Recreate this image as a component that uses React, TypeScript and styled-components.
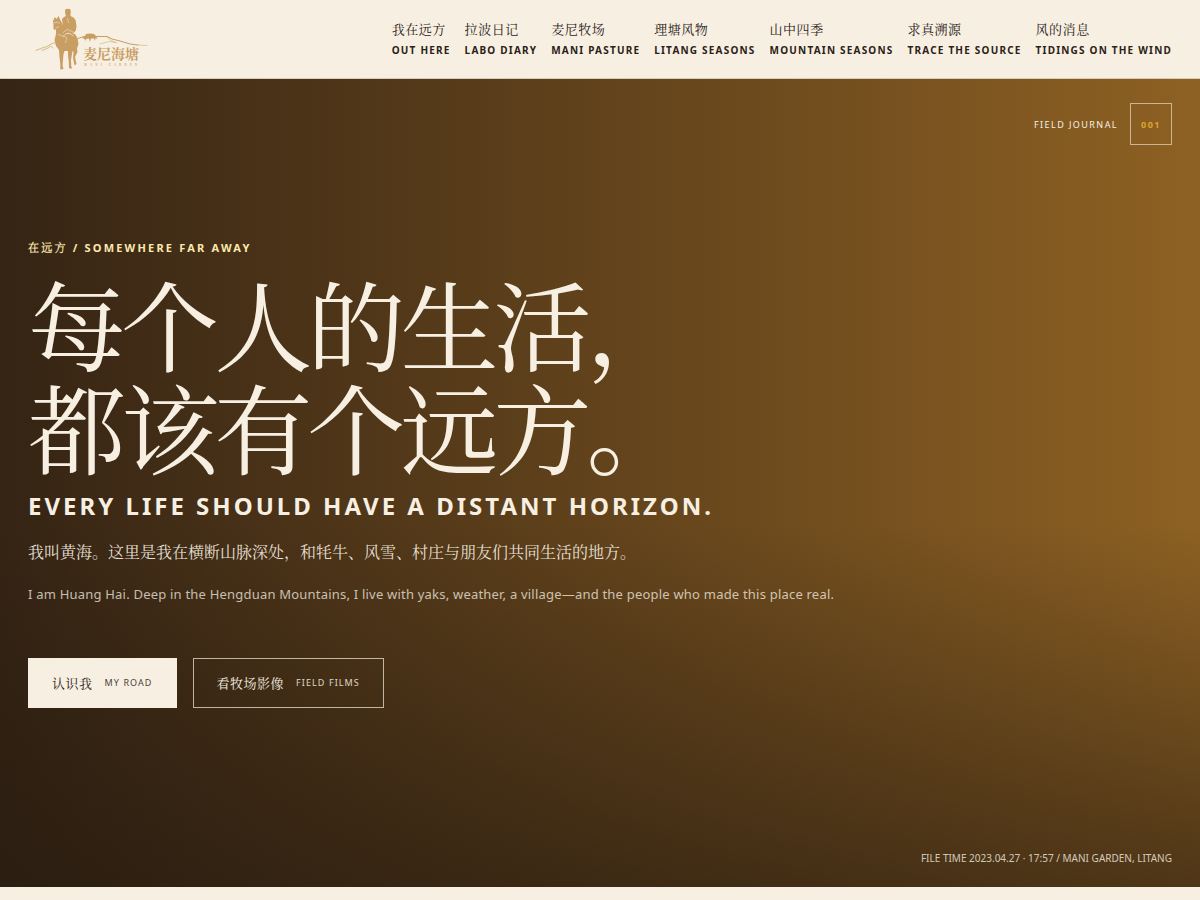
import React from "react";
import styled, { createGlobalStyle } from "styled-components";

const serif = `"Noto Serif CJK SC", "Noto Serif SC", "Noto Sans CJK SC", serif`;
const sans = `"Noto Sans", "Noto Sans CJK SC", sans-serif`;
const eyebrowFont = `"Noto Sans", "Noto Serif CJK SC ExtraLight", "Noto Sans CJK SC", sans-serif`;

const GlobalStyle = createGlobalStyle`
  *, *::before, *::after { box-sizing: border-box; }
  body { margin: 0; background: #f7f0e2; color: #2b2117; font-family: ${sans}; }
  a { color: inherit; text-decoration: none; }
`;

const Header = styled.header`
  display: flex;
  align-items: center;
  justify-content: space-between;
  height: 79px;
  padding: 0 28px;
  background: #f7f0e2;
  border-bottom: 1px solid #d8ccba;
`;

const LogoLink = styled.a`
  display: block;
  line-height: 0;
`;

const Nav = styled.nav`
  display: flex;
  gap: 14px;
`;

const NavLink = styled.a`
  display: flex;
  flex-direction: column;
  gap: 4px;
  white-space: nowrap;
`;

const NavName = styled.span`
  font: 400 13px/18px ${serif};
  letter-spacing: 0.04em;
`;

const NavLabel = styled.span`
  font: 700 10px/16px ${sans};
  letter-spacing: 0.12em;
`;

const Hero = styled.section`
  display: flex;
  flex-direction: column;
  justify-content: space-between;
  min-height: 808px;
  padding: 24px 28px 22px;
  color: #f7f0e2;
  background:
    linear-gradient(0deg, rgba(36, 25, 15, 0.6), rgba(36, 25, 15, 0) 45%),
    linear-gradient(90deg, #352414, #8e6123);
`;

const Journal = styled.div`
  display: flex;
  align-items: center;
  align-self: flex-end;
  gap: 12px;
  font-size: 9px;
  line-height: 13px;
  letter-spacing: 0.16em;
`;

const JournalNumber = styled.b`
  display: grid;
  place-items: center;
  width: 42px;
  height: 42px;
  border: 1px solid rgba(247, 240, 226, 0.6);
  color: #dba52f;
  font-size: 9px;
`;

const Intro = styled.div`
  display: flex;
  flex-direction: column;
  align-items: flex-start;
  margin-bottom: 48px;
`;

const Eyebrow = styled.p`
  margin: 0 0 14px;
  color: #fbe9ae;
  font: 700 11px/16px ${eyebrowFont};
  letter-spacing: 0.2em;
`;

const Title = styled.h1`
  margin: 0;
  font: 400 98px/103px ${serif};
  letter-spacing: -0.05em;
`;

const Subtitle = styled.p`
  margin: 12px 0 0;
  font-size: 24px;
  font-weight: 700;
  line-height: 36px;
  letter-spacing: 3px;
`;

const Lead = styled.p`
  margin: 12px 0 0;
  color: rgba(247, 240, 226, 0.92);
  font: 400 16px/32px ${serif};
`;

const LeadEnglish = styled.p`
  margin: 14px 0 0;
  color: rgba(247, 240, 226, 0.75);
  font-size: 13px;
  line-height: 24px;
  letter-spacing: 0.016em;
`;

const Actions = styled.div`
  display: flex;
  gap: 16px;
  margin-top: 52px;
`;

const Action = styled.a<{ $filled?: boolean }>`
  display: flex;
  align-items: center;
  gap: 12px;
  height: 50px;
  padding: 0 23px;
  border: 1px solid ${(p) => (p.$filled ? "#f7f0e2" : "rgba(247, 240, 226, 0.7)")};
  background: ${(p) => (p.$filled ? "#f7f0e2" : "transparent")};
  color: ${(p) => (p.$filled ? "#2b2117" : "#f7f0e2")};
  font: 400 13px/20px ${serif};
  letter-spacing: 0.04em;
`;

const ActionLabel = styled.small`
  font: 400 9px/12px ${sans};
  letter-spacing: 0.12em;
  opacity: 0.85;
`;

const FileTime = styled.p`
  align-self: flex-end;
  margin: 0;
  color: rgba(247, 240, 226, 0.8);
  font-size: 10px;
  line-height: 14px;
`;

const links = [
  ["我在远方", "OUT HERE"],
  ["拉波日记", "LABO DIARY"],
  ["麦尼牧场", "MANI PASTURE"],
  ["理塘风物", "LITANG SEASONS"],
  ["山中四季", "MOUNTAIN SEASONS"],
  ["求真溯源", "TRACE THE SOURCE"],
  ["风的消息", "TIDINGS ON THE WIND"],
];

function Logo() {
  return (
    <svg width="126" height="68" viewBox="0 0 126 68" fill="#c89e62" role="img" aria-label="麦尼海塘 Mani Garden">
      {/* ridge lines */}
      <g fill="none" stroke="#c89e62" strokeLinecap="round" strokeLinejoin="round">
        <path strokeWidth="0.700" d="M8 45.500L14 43L19 41.500L24 38.500L28 37.500M14 45.500L20 43L22.500 41L25 43" />
        <path strokeWidth="1" d="M50 33.500L56 31.500L68 31.500L79 31.500L84 34L92 36L102 39L110 40" />
        <path strokeWidth="0.500" d="M110 40L119 40.500M79 32L83 35.500L89 38M72 39L77 37.500L82 36.500L87 37.500" />
      </g>
      {/* tent */}
      <path d="M54 33L57 31L58 29L62 28.500L66 29L68 31L69.500 34L67.500 33L67 36L66 33.500L63 33.500L62 37L61 33.500L58 34L57.500 36L56.500 34Z" />
      {/* rider */}
      <path d="M37 6L37.500 4.300L40 3.700L42.300 4.300L42.800 6.500L42.500 9L42.500 11L45.500 12.500L47.500 15L48.500 21L48 25L46 28L41 28L36 29L34 25L34.500 18L34 14L36 12L38 11L37.300 9Z" />
      {/* horse */}
      <path d="M26.800 12L28.500 14L30.500 11L32 14.500L33.500 17L35 21L35 26L38 29L44 28L47 29L49.500 33L50.500 39L49 43.500L49.500 47L47 52L48.500 59L46.500 60.500L45 53L45.500 47L44.500 46L44 49L43 55L43.300 61L44 63.500L41 63.500L40.800 57L40 50L40 46L36.500 46L35.500 49L35 55L34.500 60L35.500 64L32.300 64.500L32.300 59L31.500 52L31 45L28 41L26.500 35L28 29L28 24L27 25L25.500 24L25.500 20L25 16Z" />
      <g stroke="#f7f0e2" strokeWidth="0.500" fill="none">
        <path d="M26 18L29 17L32 18.500M27.500 23L31 21.500M34.500 28L39 24.500L43 26L47 28M35 31L40 28L46 31M30 29L34 31L38 32M39.500 13L40.500 18M39 32L37.500 38" />
      </g>
      <text x="55" y="54" fontFamily={serif} fontSize="14" fontWeight="700">麦尼海塘</text>
      <text x="56" y="61" fontFamily={serif} fontSize="3" fontWeight="700" letterSpacing="3">MANI GARDEN</text>
    </svg>
  );
}

export default function App() {
  return (
    <>
      <GlobalStyle />
      <Header>
        <LogoLink href="#home"><Logo /></LogoLink>
        <Nav aria-label="主导航">
          {links.map(([name, label]) => (
            <NavLink href="#" key={label}>
              <NavName>{name}</NavName>
              <NavLabel>{label}</NavLabel>
            </NavLink>
          ))}
        </Nav>
      </Header>
      <main>
        <Hero>
          <Journal>
            <span>FIELD JOURNAL</span>
            <JournalNumber>001</JournalNumber>
          </Journal>
          <Intro>
            <Eyebrow>在远方 / SOMEWHERE FAR AWAY</Eyebrow>
            <Title>每个人的生活，<br />都该有个远方。</Title>
            <Subtitle>EVERY LIFE SHOULD HAVE A DISTANT HORIZON.</Subtitle>
            <Lead>我叫黄海。这里是我在横断山脉深处，和牦牛、风雪、村庄与朋友们共同生活的地方。</Lead>
            <LeadEnglish>I am Huang Hai. Deep in the Hengduan Mountains, I live with yaks, weather, a village—and the people who made this place real.</LeadEnglish>
            <Actions>
              <Action href="#road" $filled>认识我<ActionLabel>MY ROAD</ActionLabel></Action>
              <Action href="#films">看牧场影像<ActionLabel>FIELD FILMS</ActionLabel></Action>
            </Actions>
          </Intro>
          <FileTime>FILE TIME 2023.04.27 · 17:57 / MANI GARDEN, LITANG</FileTime>
        </Hero>
      </main>
    </>
  );
}
